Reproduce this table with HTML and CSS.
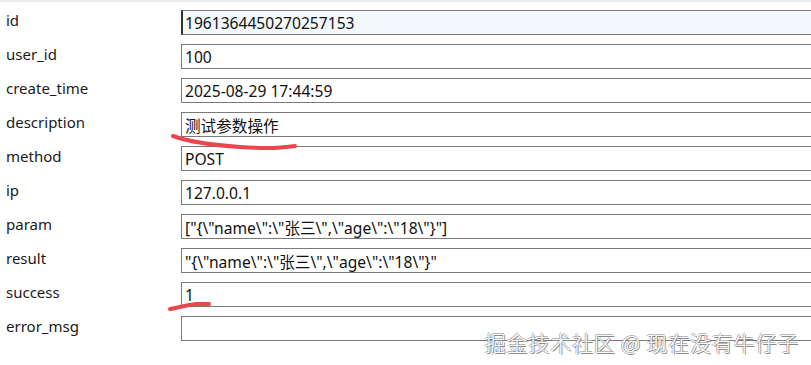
FILE: index.html
```html
<!DOCTYPE html>
<html>
  <head>
    <meta charset="utf-8" />
    <title>操作日志详情</title>
    <link rel="stylesheet" href="styles.css">
  </head>
  <body>
    <form class="log-form">
      <label class="row"><span class="name">id</span><input class="field focused" value="1961364450270257153" /></label>
      <label class="row"><span class="name">user_id</span><input class="field" value="100" /></label>
      <label class="row"><span class="name">create_time</span><input class="field" value="2025-08-29 17:44:59" /></label>
      <label class="row"><span class="name">description</span><input class="field" value="测试参数操作" /></label>
      <label class="row"><span class="name">method</span><input class="field" value="POST" /></label>
      <label class="row"><span class="name">ip</span><input class="field" value="127.0.0.1" /></label>
      <label class="row"><span class="name">param</span><input class="field" value='["{\"name\":\"张三\",\"age\":\"18\"}"]' /></label>
      <label class="row"><span class="name">result</span><input class="field" value='"{\"name\":\"张三\",\"age\":\"18\"}"' /></label>
      <label class="row"><span class="name">success</span><input class="field" value="1" /></label>
      <label class="row"><span class="name">error_msg</span><input class="field" value="" /></label>
    </form>

    <!-- pen marks drawn over the form -->
    <svg class="marks" width="811" height="365" viewBox="0 0 811 365">
      <path d="M173 134 C 190 140, 210 143, 240 145 S 280 146, 295 144" />
      <path d="M170 307 C 178 306, 186 303, 196 302 L 209 302" />
    </svg>

    <div class="watermark">掘金技术社区 @ 现在没有牛仔子</div>
  </body>
</html>
```

FILE: styles.css
```css
body {
  margin: 0;
  height: 365px;
  overflow: hidden;
  background: #fff;
  border-top: 2px solid #ededed;
  font-family: 'Noto Sans', 'Noto Sans CJK SC', sans-serif;
  font-size: 15px;
  color: #1a1a1a;
  position: relative;
}

* {
  box-sizing: border-box;
}

.log-form {
  padding-top: 8px;
  display: flex;
  flex-direction: column;
  gap: 9px;
}

.row {
  display: grid;
  grid-template-columns: 181px 660px;
  align-items: center;
  height: 25px;
}

.name {
  padding-left: 6px;
  margin-top: -6px;
}

.field {
  font: inherit;
  font-size: 15.6px;
  color: #111;
  height: 25px;
  padding: 1px 3px 0;
  border: 1px solid #7a7a7a;
  border-radius: 0;
  background: #fff;
  outline: none;
}

.field.focused {
  background: #f3f8fc;
  border-left: 2px solid #333;
  padding-left: 2px;
}

.marks {
  position: absolute;
  left: 0;
  top: 0;
  pointer-events: none;
}

.marks path {
  fill: none;
  stroke: #e9474d;
  stroke-width: 4;
  stroke-linecap: round;
}

.watermark {
  position: absolute;
  right: 12px;
  top: 325px;
  font-family: 'Noto Sans CJK SC', sans-serif;
  font-size: 21px;
  font-weight: 300;
  letter-spacing: 0.8px;
  color: #fbfbfb;
  text-shadow: 1px 1px 0 #8a8a8a, -1px 0 0 #b0b0b0, 0 -1px 0 #b8b8b8;
}
```
